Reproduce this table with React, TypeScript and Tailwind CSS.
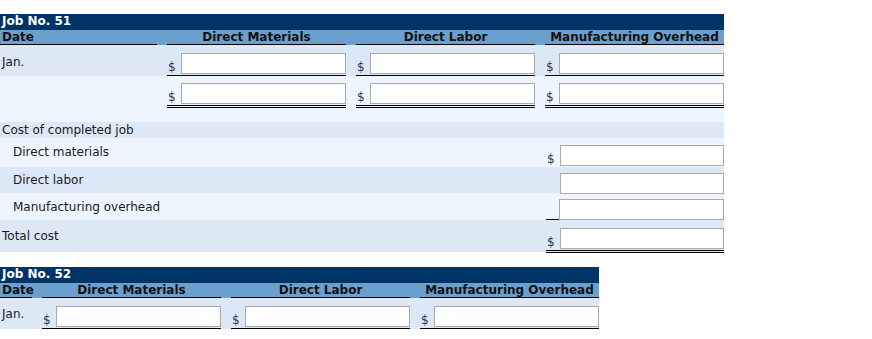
import React from 'react';

type Col = { label: string };

const COLS: Col[] = [
  { label: 'Direct Materials' },
  { label: 'Direct Labor' },
  { label: 'Manufacturing Overhead' },
];

const font = { fontFamily: '"DejaVu Sans", Verdana, sans-serif' };

function Dollar({ show = true }: { show?: boolean }) {
  return (
    <span className="flex w-[14px] shrink-0 items-end pl-[1px] text-[12px] leading-[14px] text-[#2b3a4a]">
      {show ? '$' : ''}
    </span>
  );
}

function Field() {
  return <input className="h-[21px] min-w-0 flex-1 border border-[#a9a9a9] bg-white outline-none" />;
}

// one amount cell: "$" + box, ruled underneath
function Amount({ rule, dollar = true }: { rule: 'single' | 'double' | 'none'; dollar?: boolean }) {
  const border =
    rule === 'single'
      ? 'border-b border-black'
      : rule === 'double'
        ? 'border-b-[3px] border-double border-black'
        : '';
  return (
    <div className={`flex pb-[1px] ${border}`}>
      <Dollar show={dollar} />
      <Field />
    </div>
  );
}

function JobHeader({ title, dateWidth }: { title: string; dateWidth: string }) {
  return (
    <>
      <div className="h-[16px] bg-[#003366] px-[2px] text-[12px] font-bold leading-[15px] text-white">{title}</div>
      <div className={`grid ${dateWidth} bg-[#6a9fce] text-[12px] font-bold leading-[14px] text-[#111]`}>
        <div className="border-b border-black px-[2px]">Date</div>
        {COLS.map((c) => (
          <div key={c.label} className="pl-[10px]">
            <div className="border-b border-black text-center">{c.label}</div>
          </div>
        ))}
      </div>
    </>
  );
}

function Job51() {
  const grid = 'grid-cols-[157px_189px_189px_189px]';
  return (
    <div className="mt-[14px] w-[724px]">
      <JobHeader title="Job No. 51" dateWidth={grid} />

      <div className={`grid ${grid} h-[31px] bg-[#dde8f7]`}>
        <div className="px-[2px] pt-[10px] text-[12px] leading-[14px]">Jan.</div>
        {COLS.map((c) => (
          <div key={c.label} className="pl-[10px] pt-[8px]">
            <Amount rule="single" />
          </div>
        ))}
      </div>
      <div className={`grid ${grid} h-[46px] bg-[#eef5fe]`}>
        <div />
        {COLS.map((c) => (
          <div key={c.label} className="pl-[10px] pt-[7px]">
            <Amount rule="double" />
          </div>
        ))}
      </div>

      {/* cost of completed job */}
      <div className="h-[16px] bg-[#dde8f7] px-[2px] text-[12px] leading-[16px]">Cost of completed job</div>
      <CostRow label="Direct materials" bg="bg-[#eef5fe]" h="h-[29px]" lt="pt-[7px]" pt="pt-[7px]" dollar rule="none" indent />
      <CostRow label="Direct labor" bg="bg-[#dde8f7]" h="h-[26px]" lt="pt-[6px]" pt="pt-[6px]" rule="none" indent />
      <CostRow label="Manufacturing overhead" bg="bg-[#eef5fe]" h="h-[27px]" lt="pt-[7px]" pt="pt-[6px]" rule="single" indent />
      <CostRow label="Total cost" bg="bg-[#dde8f7]" h="h-[32px]" lt="pt-[9px]" pt="pt-[8px]" dollar rule="double" />
    </div>
  );
}

function CostRow({
  label,
  bg,
  h,
  lt,
  pt,
  dollar = false,
  rule,
  indent = false,
}: {
  label: string;
  bg: string;
  h: string;
  lt: string;
  pt: string;
  dollar?: boolean;
  rule: 'single' | 'double' | 'none';
  indent?: boolean;
}) {
  return (
    <div className={`grid grid-cols-[546px_178px] ${h} ${bg}`}>
      <div className={`${indent ? 'pl-[13px]' : 'pl-[2px]'} ${lt} text-[12px] leading-[14px]`}>{label}</div>
      <div className={pt}>
        {rule === 'single' ? (
          <div className="flex">
            <span className="w-[13px] shrink-0 border-b border-black" />
            <Field />
          </div>
        ) : (
          <Amount rule={rule} dollar={dollar} />
        )}
      </div>
    </div>
  );
}

function Job52() {
  const grid = 'grid-cols-[32px_189px_189px_189px]';
  return (
    <div className="mt-[15px] w-[599px]">
      <JobHeader title="Job No. 52" dateWidth={grid} />
      <div className={`grid ${grid} h-[31px] bg-[#dde8f7]`}>
        <div className="px-[2px] pt-[9px] text-[12px] leading-[14px]">Jan.</div>
        {COLS.map((c) => (
          <div key={c.label} className="pl-[10px] pt-[8px]">
            <Amount rule="single" />
          </div>
        ))}
      </div>
    </div>
  );
}

export default function App() {
  return (
    <div className="h-[339px] w-[872px] bg-white text-[#1a1a1a]" style={font}>
      <Job51 />
      <Job52 />
    </div>
  );
}
